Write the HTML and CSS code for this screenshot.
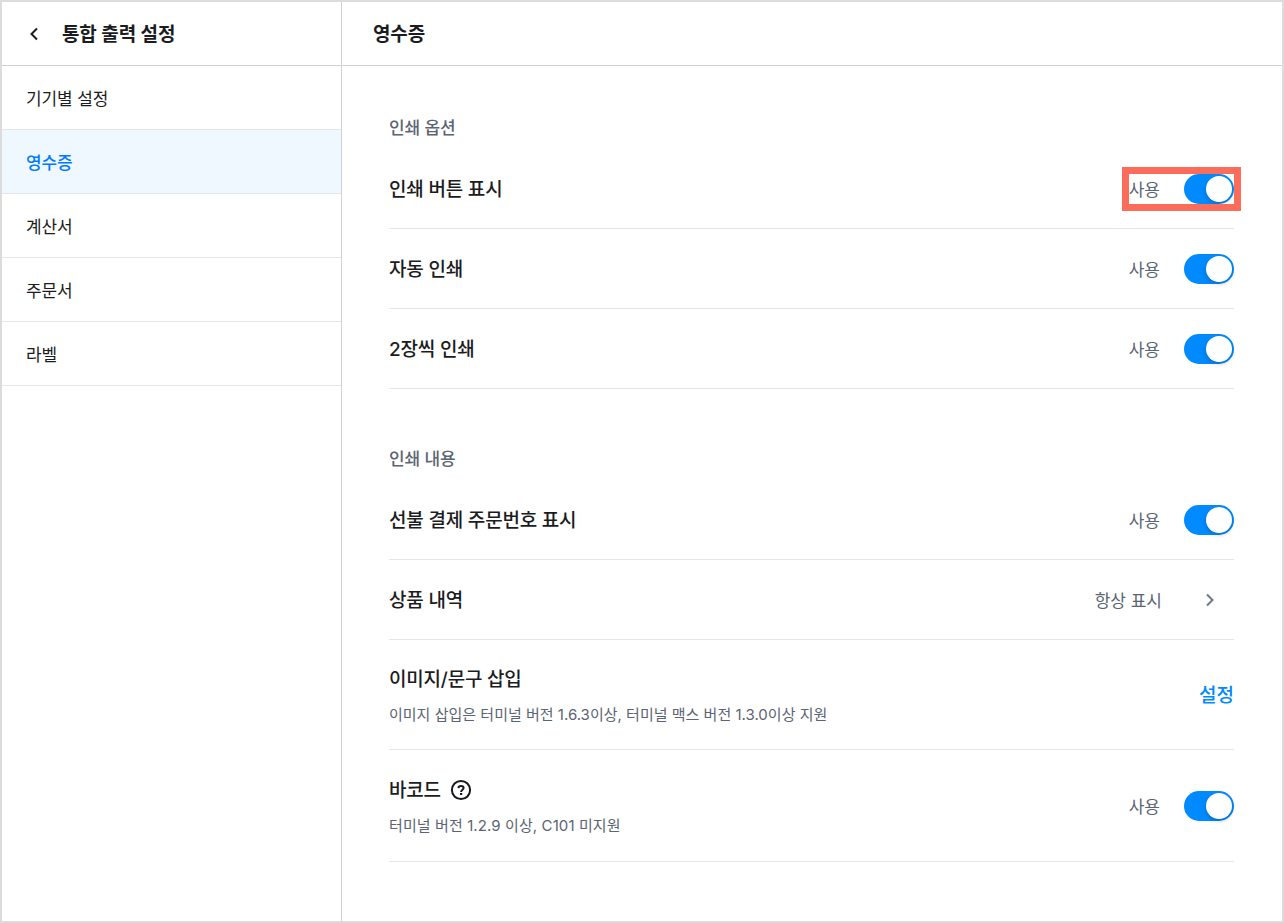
FILE: index.html
```html
<!DOCTYPE html>
<html lang="ko">
<head>
    <meta charset="UTF-8">
    <meta name="viewport" content="width=device-width, initial-scale=1.0">
    <title>통합 출력 설정</title>
    <link rel="stylesheet" href="styles.css">
</head>
<body>
    <div class="container">
        <div class="sidebar">
            <div class="header sidebar-header">
                <svg class="back" viewBox="0 0 20 20"><path d="M13 4.5 7.5 10l5.5 5.5"/></svg>
                <h1 class="side-title">통합 출력 설정</h1>
            </div>
            <ul class="menu">
                <li>기기별 설정</li>
                <li class="active">영수증</li>
                <li>계산서</li>
                <li>주문서</li>
                <li>라벨</li>
            </ul>
        </div>
        <div class="main">
            <div class="header main-header">
                <h2 class="main-title">영수증</h2>
            </div>
            <div class="content">
                <div class="section">
                    <div class="section-title">인쇄 옵션</div>
                    <div class="row">
                        <div class="name">인쇄 버튼 표시</div>
                        <div class="control highlight"><span class="state">사용</span><span class="switch"></span></div>
                    </div>
                    <div class="row">
                        <div class="name">자동 인쇄</div>
                        <div class="control"><span class="state">사용</span><span class="switch"></span></div>
                    </div>
                    <div class="row">
                        <div class="name">2장씩 인쇄</div>
                        <div class="control"><span class="state">사용</span><span class="switch"></span></div>
                    </div>
                </div>
                <div class="section">
                    <div class="section-title">인쇄 내용</div>
                    <div class="row">
                        <div class="name">선불 결제 주문번호 표시</div>
                        <div class="control"><span class="state">사용</span><span class="switch"></span></div>
                    </div>
                    <div class="row">
                        <div class="name">상품 내역</div>
                        <div class="control">
                            <span class="value">항상 표시</span>
                            <svg class="arrow" viewBox="0 0 20 20"><path d="M7 4.5 12.5 10 7 15.5"/></svg>
                        </div>
                    </div>
                    <div class="row image-row">
                        <div class="text">
                            <div class="name">이미지/문구 삽입</div>
                            <div class="desc">이미지 삽입은 터미널 버전 1.6.3이상, 터미널 맥스 버전 1.3.0이상 지원</div>
                        </div>
                        <div class="link">설정</div>
                    </div>
                    <div class="row barcode-row">
                        <div class="text">
                            <div class="name">바코드
                                <svg class="help" viewBox="0 0 24 24"><circle cx="12" cy="12" r="9.1"/><path d="M9.4 10.1C9.5 8.6 10.5 7.9 12 7.9s2.6.8 2.6 2.1c0 1.7-2.5 1.7-2.5 3.9"/><path d="M11 15h2.2v2H11z" class="dot"/></svg>
                            </div>
                            <div class="desc">터미널 버전 1.2.9 이상, C101 미지원</div>
                        </div>
                        <div class="control"><span class="state">사용</span><span class="switch"></span></div>
                    </div>
                </div>
            </div>
        </div>
    </div>
</body>
</html>
```
FILE: styles.css
```css
*{
    box-sizing: border-box;
}
body{
    margin: 0;
    font-family: Inter, "Noto Sans CJK KR", sans-serif;
    color: #1b1c22;
    background-color: #fff;
}
.container{
    display: flex;
    height: 923px;
    border: 2px solid #dcdcdc;
}
.sidebar{
    width: 340px;
    border-right: 1px solid #cfd1d4;
}
.main{
    flex: 1;
}
.header{
    display: flex;
    align-items: center;
    height: 64px;
    border-bottom: 1px solid #cfd1d4;
}
.sidebar-header{
    padding-left: 22px;
}
.main-header{
    padding-left: 31px;
}
.side-title, .main-title{
    margin: 0;
    padding-top: 2px;
    font-size: 19px;
    font-weight: 600;
    line-height: 28px;
    letter-spacing: -0.15px;
    white-space: nowrap;
}
.back{
    width: 20px;
    height: 20px;
    margin-right: 18px;
}
.back path, .arrow path{
    fill: none;
    stroke: #1b1c22;
    stroke-width: 2;
}
.arrow path{
    stroke: #6f7885;
}
.menu{
    margin: 0;
    padding: 0;
    list-style: none;
    font-size: 17px;
    font-weight: 400;
}
.menu li{
    display: flex;
    align-items: center;
    height: 64px;
    padding: 0 0 1px 24px;
    letter-spacing: -0.1px;
    border-bottom: 1px solid #e4e6e8;
}
.menu .active{
    background-color: #eff8ff;
    color: #007bff;
    font-weight: 500;
}
.content{
    padding: 50px 48px 0 47px;
}
.section{
    margin-bottom: 58px;
}
.section-title{
    height: 33px;
    line-height: 24px;
    font-size: 17px;
    font-weight: 500;
    letter-spacing: -0.1px;
    color: #5b6472;
}
.row{
    display: flex;
    justify-content: space-between;
    align-items: center;
    height: 80px;
    border-bottom: 1px solid #e4e6e8;
}
.name{
    display: flex;
    align-items: center;
    height: 28px;
    padding-bottom: 2px;
    font-size: 19px;
    font-weight: 500;
    letter-spacing: -0.2px;
    white-space: nowrap;
}
.image-row{
    height: 110px;
}
.barcode-row{
    height: 112px;
}
.desc{
    height: 22px;
    margin-top: 11px;
    line-height: 24px;
    font-size: 15px;
    color: #5b6472;
    letter-spacing: 0.01px;
    white-space: nowrap;
}
.barcode-row .desc{
    letter-spacing: 0.1px;
}
.control{
    position: relative;
    display: flex;
    align-items: center;
}
.state, .value{
    padding-bottom: 1px;
    font-size: 17px;
    color: #5b6472;
    white-space: nowrap;
}
.state{
    margin-right: 24px;
}
.switch{
    width: 50px;
    height: 30px;
    padding: 2px;
    border-radius: 15px;
    background-color: #008aff;
}
.switch::after{
    content: "";
    display: block;
    width: 26px;
    height: 26px;
    margin-left: 20px;
    border-radius: 50%;
    background-color: #fff;
    box-shadow: 0 2px 4px rgba(0, 0, 0, 0.2);
}
.highlight::before{
    content: "";
    position: absolute;
    box-sizing: border-box;
    top: -7px;
    right: -7px;
    width: 119px;
    height: 44px;
    border: 7px solid #fc6c5a;
}
.arrow{
    width: 20px;
    height: 20px;
    margin: 0 14px 0 38px;
}
.link{
    padding-bottom: 2px;
    font-size: 19px;
    font-weight: 500;
    color: #008aff;
}
.help{
    width: 24px;
    height: 24px;
    margin: 4px 0 0 8px;
    fill: none;
    stroke: #17181c;
    stroke-width: 2;
}
.help .dot{
    fill: #17181c;
    stroke: none;
}
```
